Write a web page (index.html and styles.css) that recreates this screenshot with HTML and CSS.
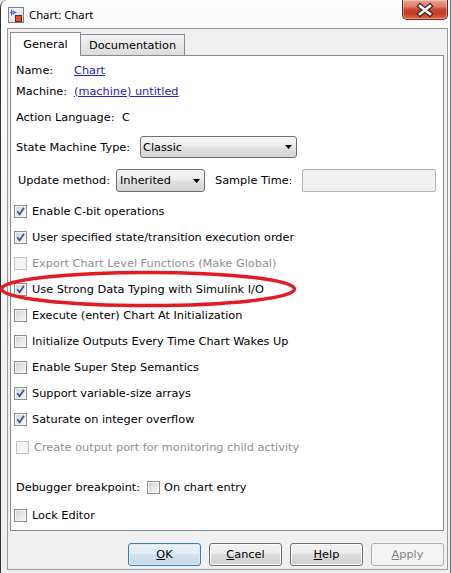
FILE: index.html
```html
<!DOCTYPE html>
<html>
<head>
<meta charset="utf-8">
<title>Chart: Chart</title>
<link rel="stylesheet" href="styles.css">
</head>
<body>
<div class="window">
  <div class="titlebar">
    <svg class="appicon" width="16" height="16" viewBox="0 0 16 16">
      <defs>
        <linearGradient id="ig" x1="0" y1="0" x2="1" y2="1">
          <stop offset="0" stop-color="#ffffff"/>
          <stop offset="1" stop-color="#d4d4d4"/>
        </linearGradient>
      </defs>
      <rect x="0.5" y="0.5" width="15" height="15" fill="url(#ig)" stroke="#808080"/>
      <path d="M2 5.5h2" stroke="#2a64a8" stroke-width="1"/>
      <path d="M3.5 2.5v6" stroke="#2a64a8" stroke-width="1"/>
      <path d="M4.5 3l4.5 2.5-4.5 2.5z" fill="#3b8ee0"/>
      <rect x="7.5" y="8.5" width="6" height="6" fill="#e5541c" stroke="#6a2b12"/>
    </svg>
    <span class="title">Chart: Chart</span>
    <div class="close">
      <svg width="44" height="18" viewBox="0 0 44 18">
        <path d="M17 5l10 8M27 5l-10 8" stroke="#3a2420" stroke-width="5" stroke-linecap="square" fill="none"/>
        <path d="M17 5l10 8M27 5l-10 8" stroke="#ffffff" stroke-width="2.6" stroke-linecap="square" fill="none"/>
      </svg>
    </div>
  </div>

  <div class="client">
    <div class="tabs">
      <div class="tab tab-active">General</div>
      <div class="tab tab-plain">Documentation</div>
    </div>
    <div class="panel">
      <div class="row row-field"><span class="lbl w-name">Name:</span><a class="link">Chart</a></div>
      <div class="row row-field r-machine"><span class="lbl w-name">Machine:</span><a class="link">(machine) untitled</a></div>
      <div class="row row-field r-action"><span class="lbl w-action">Action Language:</span><span>C</span></div>
      <div class="row row-field r-type">
        <span class="lbl w-type">State Machine Type:</span>
        <div class="combo combo-type"><span>Classic</span><svg class="arrow" width="7" height="4" viewBox="0 0 7 4"><polygon points="0,0 7,0 3.5,4" fill="#000"/></svg></div>
      </div>
      <div class="row r-update">
        <span class="lbl w-update">Update method:</span>
        <div class="combo combo-update"><span>Inherited</span><svg class="arrow" width="7" height="4" viewBox="0 0 7 4"><polygon points="0,0 7,0 3.5,4" fill="#000"/></svg></div>
        <span class="lbl w-sample">Sample Time:</span>
        <div class="field"></div>
      </div>

      <div class="checks">
        <div class="row row-check"><span class="cb"><svg class="tick" width="11" height="11" viewBox="0 0 11 11"><path d="M2.3 5.2L4.6 8.2L9 1.8" stroke="#3a5590" stroke-width="1.7" fill="none"/></svg></span><span>Enable C-bit operations</span></div>
        <div class="row row-check"><span class="cb"><svg class="tick" width="11" height="11" viewBox="0 0 11 11"><path d="M2.3 5.2L4.6 8.2L9 1.8" stroke="#3a5590" stroke-width="1.7" fill="none"/></svg></span><span>User specified state/transition execution order</span></div>
        <div class="row row-check dis"><span class="cb cb-dis"></span><span>Export Chart Level Functions (Make Global)</span></div>
        <div class="row row-check"><span class="cb"><svg class="tick" width="11" height="11" viewBox="0 0 11 11"><path d="M2.3 5.2L4.6 8.2L9 1.8" stroke="#3a5590" stroke-width="1.7" fill="none"/></svg></span><span>Use Strong Data Typing with Simulink I/O</span></div>
        <div class="row row-check"><span class="cb"></span><span>Execute (enter) Chart At Initialization</span></div>
        <div class="row row-check"><span class="cb"></span><span>Initialize Outputs Every Time Chart Wakes Up</span></div>
        <div class="row row-check"><span class="cb"></span><span>Enable Super Step Semantics</span></div>
        <div class="row row-check"><span class="cb"><svg class="tick" width="11" height="11" viewBox="0 0 11 11"><path d="M2.3 5.2L4.6 8.2L9 1.8" stroke="#3a5590" stroke-width="1.7" fill="none"/></svg></span><span>Support variable-size arrays</span></div>
        <div class="row row-check"><span class="cb"><svg class="tick" width="11" height="11" viewBox="0 0 11 11"><path d="M2.3 5.2L4.6 8.2L9 1.8" stroke="#3a5590" stroke-width="1.7" fill="none"/></svg></span><span>Saturate on integer overflow</span></div>
      </div>
      <div class="row r-create dis"><span class="cb cb-dis"></span><span>Create output port for monitoring child activity</span></div>
      <div class="row r-debug"><span class="lbl w-debug">Debugger breakpoint:</span><span class="cb"></span><span>On chart entry</span></div>
      <div class="row r-lock"><span class="cb"></span><span>Lock Editor</span></div>
    </div>

    <div class="buttons">
      <div class="btn btn-default"><span class="mn">O</span>K</div>
      <div class="btn"><span class="mn">C</span>ancel</div>
      <div class="btn"><span class="mn">H</span>elp</div>
      <div class="btn btn-disabled"><span class="mn">A</span>pply</div>
    </div>
  </div>

  <svg class="highlight" width="451" height="573" viewBox="0 0 451 573">
    <ellipse cx="148" cy="289" rx="146.5" ry="16.5" fill="none" stroke="#e31b23" stroke-width="3.5"/>
  </svg>
</div>
</body>
</html>
```

FILE: styles.css
```css
* { box-sizing: border-box; }

html, body {
  margin: 0;
  padding: 0;
}

body {
  width: 451px;
  height: 573px;
  overflow: hidden;
  background: #f0f0f0;
  font-family: "DejaVu Sans", sans-serif;
  font-size: 11.3px;
  color: #000;
}

.window {
  position: relative;
  width: 451px;
  height: 573px;
  border-left: 1px solid #333;
  border-right: 1px solid #6d6d6d;
  border-top-left-radius: 7px;
  background: linear-gradient(180deg, #fdfdfd 0%, #f3f4f5 40%, #eceeef 100%);
}

/* title bar */
.titlebar {
  height: 28px;
  display: flex;
  align-items: flex-start;
  padding-left: 7px;
  padding-right: 2px;
}

.appicon {
  flex: none;
  margin-top: 7px;
}

.title {
  margin-left: 5px;
  margin-top: 7px;
  line-height: 16px;
  font-family: "Noto Sans", sans-serif;
  font-size: 11.3px;
  color: #000;
}

.close {
  margin-left: auto;
  width: 46px;
  height: 20px;
  border: 1px solid #6b2b22;
  border-top: none;
  border-radius: 0 0 5px 5px;
  background: linear-gradient(180deg, #e9a594 0%, #dc7d67 35%, #c8452f 50%, #c33b25 70%, #e0673f 100%);
  box-shadow: inset 0 0 0 1px rgba(255, 220, 210, 0.45);
  display: flex;
  align-items: center;
  justify-content: center;
}

/* client area */
.client {
  margin-left: 6px;
  width: 441px;
  height: 542px;
  border: 1px solid #9a9a9a;
  background: #f0f0f0;
  padding: 3px 0 0 2px;
}

.tabs {
  position: relative;
  z-index: 1;
  display: flex;
  align-items: flex-end;
  height: 24px;
  margin-bottom: -1px;
}

.tab {
  display: flex;
  align-items: center;
  justify-content: center;
  border: 1px solid #898c95;
  border-bottom: none;
}

.tab-active {
  width: 71px;
  height: 24px;
  background: #fff;
}

.tab-plain {
  width: 104px;
  height: 22px;
  border-left: none;
  border-bottom: 1px solid #898c95;
  background: linear-gradient(180deg, #f4f4f4 0%, #e9e9e9 50%, #dcdcdc 100%);
}

.panel {
  width: 434px;
  height: 476px;
  border: 1px solid #898c95;
  background: #fff;
  padding-top: 4px;
  display: flex;
  flex-direction: column;
}

.row {
  display: flex;
  align-items: center;
  height: 20px;
  flex: none;
  white-space: nowrap;
}

.row-field { padding-left: 5px; }

.lbl { flex: none; }

.w-name { width: 58px; }
.w-action { width: 106px; }
.w-type { width: 124px; }
.w-update { width: 98px; }
.w-sample { width: 87px; margin-left: 10px; }
.w-debug { width: 131px; }

.r-machine { margin-top: 1px; }
.r-action { margin-top: 6px; }
.r-type { margin-top: 9px; height: 22px; }
.r-update { margin-top: 11px; height: 23px; padding-left: 7px; }

.link {
  color: #2424b4;
  text-decoration: underline;
}

.combo {
  display: flex;
  align-items: center;
  height: 22px;
  border: 1px solid #707070;
  border-radius: 3px;
  background: linear-gradient(180deg, #f6f6f6 0%, #ececec 45%, #e0e0e0 55%, #d4d4d4 100%);
  padding-left: 2px;
}

.combo-type { width: 157px; }
.combo-update { width: 89px; height: 23px; padding-left: 3px; }

.arrow {
  margin-left: auto;
  margin-right: 4px;
  flex: none;
}

.field {
  width: 134px;
  height: 23px;
  border: 1px solid #b4b4b4;
  border-radius: 2px;
  background: #f0f0f0;
}

/* checkboxes */
.checks {
  margin-top: 9px;
  display: flex;
  flex-direction: column;
  gap: 6px;
}

.row-check { padding-left: 3px; }

.cb {
  flex: none;
  width: 13px;
  height: 13px;
  margin-right: 5px;
  border: 1px solid #8e8f8f;
  background: linear-gradient(135deg, #cdd0d4 0%, #e6e7e9 55%, #f8f8f8 100%);
  box-shadow: inset 0 0 0 1px #f6f6f6;
  display: flex;
  align-items: center;
  justify-content: center;
}

.cb-dis {
  border-color: #c3c3c3;
  background: #f4f4f4;
  box-shadow: none;
}

.tick { display: block; }

.dis { color: #8e8e8e; }

.r-create { margin-top: 8px; padding-left: 5px; }
.r-debug { margin-top: 20px; padding-left: 5px; }
.r-debug .cb { margin-right: 4px; }
.r-lock { margin-top: 8px; padding-left: 3px; }

/* buttons */
.buttons {
  display: flex;
  justify-content: flex-end;
  gap: 8px;
  margin-top: 12px;
  padding-right: 3px;
}

.btn {
  width: 73px;
  height: 23px;
  border: 1px solid #707070;
  border-radius: 3px;
  background: linear-gradient(180deg, #f2f2f2 0%, #ebebeb 50%, #dddddd 50%, #cfcfcf 100%);
  box-shadow: inset 0 0 0 1px #fbfbfb;
  display: flex;
  align-items: center;
  justify-content: center;
}

.btn-default {
  border-color: #3c7fb1;
  background: linear-gradient(180deg, #edf4f9 0%, #e2ecf3 50%, #d2e2ee 50%, #c6d9e8 100%);
  box-shadow: inset 0 0 0 1px #d6ecf9;
}

.btn-disabled {
  border-color: #adb2b5;
  background: #f4f4f4;
  box-shadow: none;
  color: #838383;
}

.mn { text-decoration: underline; }

.highlight {
  position: absolute;
  left: -1px;
  top: 0;
  pointer-events: none;
}
```
